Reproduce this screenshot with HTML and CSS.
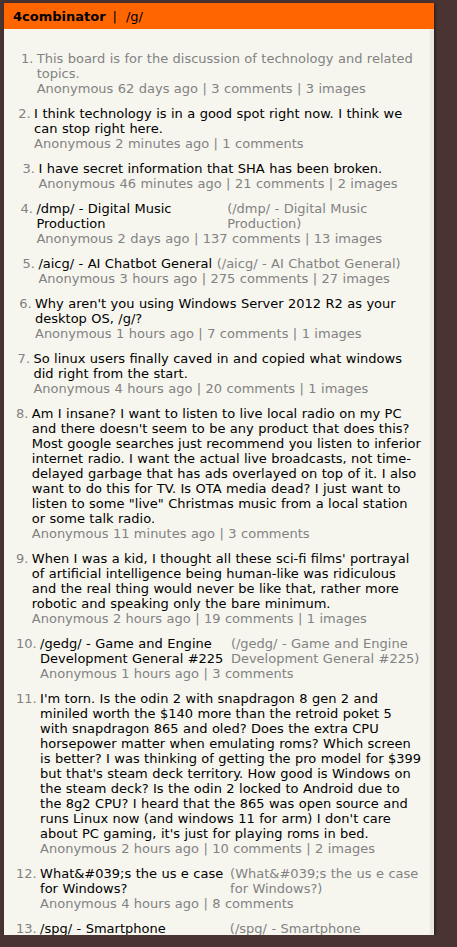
FILE: index.html
```html
<!DOCTYPE html>
<html lang="en">
<head>
<meta charset="utf-8">
<title>4combinator | /g/</title>
<link rel="stylesheet" href="styles.css">
</head>
<body>
<div class="page">
  <header class="header">
    <b class="brand">4combinator</b>
    <span class="sep">|</span>
    <span class="board">/g/</span>
  </header>
  <main class="content">
    <ol class="items">
      <li class="item">
        <span class="rank">1.</span>
        <div class="body">
          <div class="titlerow"><span class="title sticky">This board is for the discussion of technology and related topics.</span></div>
          <div class="meta">Anonymous 62 days ago | 3 comments | 3 images</div>
        </div>
      </li>
      <li class="item">
        <span class="rank">2.</span>
        <div class="body">
          <div class="titlerow"><span class="title">I think technology is in a good spot right now. I think we can stop right here.</span></div>
          <div class="meta">Anonymous 2 minutes ago | 1 comments</div>
        </div>
      </li>
      <li class="item">
        <span class="rank">3.</span>
        <div class="body">
          <div class="titlerow"><span class="title">I have secret information that SHA has been broken.</span></div>
          <div class="meta">Anonymous 46 minutes ago | 21 comments | 2 images</div>
        </div>
      </li>
      <li class="item">
        <span class="rank">4.</span>
        <div class="body">
          <div class="titlerow"><span class="title">/dmp/ - Digital Music Production</span><span class="site">(/dmp/ - Digital Music Production)</span></div>
          <div class="meta">Anonymous 2 days ago | 137 comments | 13 images</div>
        </div>
      </li>
      <li class="item">
        <span class="rank">5.</span>
        <div class="body">
          <div class="titlerow"><span class="title">/aicg/ - AI Chatbot General</span><span class="site">(/aicg/ - AI Chatbot General)</span></div>
          <div class="meta">Anonymous 3 hours ago | 275 comments | 27 images</div>
        </div>
      </li>
      <li class="item">
        <span class="rank">6.</span>
        <div class="body">
          <div class="titlerow"><span class="title">Why aren't you using Windows Server 2012 R2 as your desktop OS, /g/?</span></div>
          <div class="meta">Anonymous 1 hours ago | 7 comments | 1 images</div>
        </div>
      </li>
      <li class="item">
        <span class="rank">7.</span>
        <div class="body">
          <div class="titlerow"><span class="title">So linux users finally caved in and copied what windows did right from the start.</span></div>
          <div class="meta">Anonymous 4 hours ago | 20 comments | 1 images</div>
        </div>
      </li>
      <li class="item">
        <span class="rank">8.</span>
        <div class="body">
          <div class="titlerow"><span class="title">Am I insane? I want to listen to live local radio on my PC and there doesn't seem to be any product that does this? Most google searches just recommend you listen to inferior internet radio. I want the actual live broadcasts, not time-delayed garbage that has ads overlayed on top of it. I also want to do this for TV. Is OTA media dead? I just want to listen to some "live" Christmas music from a local station or some talk radio.</span></div>
          <div class="meta">Anonymous 11 minutes ago | 3 comments</div>
        </div>
      </li>
      <li class="item">
        <span class="rank">9.</span>
        <div class="body">
          <div class="titlerow"><span class="title">When I was a kid, I thought all these sci-fi films' portrayal of artificial intelligence being human-like was ridiculous and the real thing would never be like that, rather more robotic and speaking only the bare minimum.</span></div>
          <div class="meta">Anonymous 2 hours ago | 19 comments | 1 images</div>
        </div>
      </li>
      <li class="item">
        <span class="rank">10.</span>
        <div class="body">
          <div class="titlerow"><span class="title">/gedg/ - Game and Engine Development General #225</span><span class="site">(/gedg/ - Game and Engine Development General #225)</span></div>
          <div class="meta">Anonymous 1 hours ago | 3 comments</div>
        </div>
      </li>
      <li class="item">
        <span class="rank">11.</span>
        <div class="body">
          <div class="titlerow"><span class="title">I'm torn. Is the odin 2 with snapdragon 8 gen 2 and miniled worth the $140 more than the retroid poket 5 with snapdragon 865 and oled? Does the extra CPU horsepower matter when emulating roms? Which screen is better? I was thinking of getting the pro model for $399 but that's steam deck territory. How good is Windows on the steam deck? Is the odin 2 locked to Android due to the 8g2 CPU? I heard that the 865 was open source and runs Linux now (and windows 11 for arm) I don't care about PC gaming, it's just for playing roms in bed.</span></div>
          <div class="meta">Anonymous 2 hours ago | 10 comments | 2 images</div>
        </div>
      </li>
      <li class="item">
        <span class="rank">12.</span>
        <div class="body">
          <div class="titlerow"><span class="title">What&amp;#039;s the us e case for Windows?</span><span class="site">(What&amp;#039;s the us e case for Windows?)</span></div>
          <div class="meta">Anonymous 4 hours ago | 8 comments</div>
        </div>
      </li>
      <li class="item">
        <span class="rank">13.</span>
        <div class="body">
          <div class="titlerow"><span class="title">/spg/ - Smartphone Discussion General</span><span class="site">(/spg/ - Smartphone Discussion General)</span></div>
          <div class="meta">Anonymous 3 hours ago | 41 comments | 6 images</div>
        </div>
      </li>
    </ol>
  </main>
</div>
</body>
</html>
```
FILE: styles.css
```css
html, body {
  margin: 0;
  padding: 0;
  background: #4a3431;
}

body {
  font-family: "DejaVu Sans", Verdana, sans-serif;
  font-size: 13px;
  line-height: 15px;
  word-spacing: 0.3px;
  color: #000;
}

.page {
  margin: 3px 0 0 4px;
  width: 430px;
  height: 932px;
  display: flex;
  flex-direction: column;
  box-shadow: 1px 1px 3px rgba(0, 0, 0, 0.55);
}

.header {
  flex: 0 0 26px;
  background: #ff6600;
  display: flex;
  align-items: center;
  padding-left: 9px;
}

.brand {
  font-weight: bold;
}

.sep {
  margin: 0 9px 0 7px;
}

.content {
  flex: 1 1 auto;
  min-height: 0;
  overflow: hidden;
  background: #f6f6ef;
  border-right: 4px solid #e9e9e2;
  padding: 22px 7.5px 0 12px;
}

.items {
  list-style: none;
  margin: 0;
  padding: 0;
}

.item {
  display: flex;
  gap: 3.4px;
  margin-bottom: 10px;
}

.rank {
  flex: 0 1 19px;
  text-align: right;
  color: #828282;
}

.body {
  flex: 0 1 auto;
}

.titlerow {
  display: flex;
  gap: 4.5px;
}

.title {
  flex: 0 1 auto;
}

.title.sticky {
  color: #828282;
}

.site {
  flex: 0 1 auto;
  color: #828282;
}

.meta {
  color: #828282;
}
```
